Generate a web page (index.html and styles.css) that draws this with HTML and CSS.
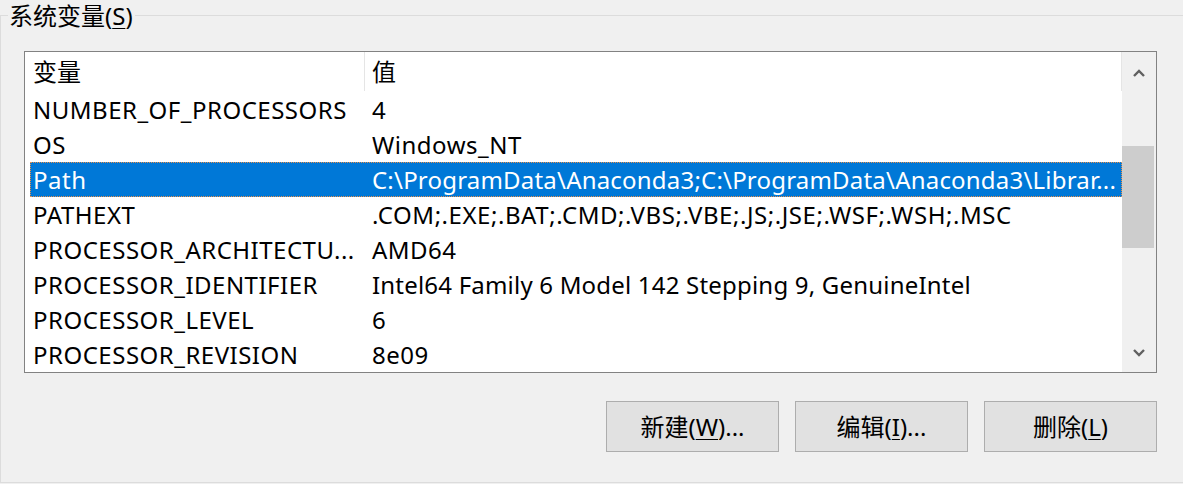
FILE: index.html
```html
<!DOCTYPE html>
<html lang="zh-CN">
<head>
<meta charset="utf-8">
<title>系统变量</title>
<link rel="stylesheet" href="styles.css">
</head>
<body>
<div class="group">
  <div class="title">系统变量(<u>S</u>)</div>
  <div class="list">
    <div class="main">
      <div class="head">
        <div class="hcol hcol1">变量</div>
        <div class="hcol hcol2">值</div>
      </div>
      <div class="row"><div class="c1">NUMBER_OF_PROCESSORS</div><div class="c2">4</div></div>
      <div class="row"><div class="c1">OS</div><div class="c2">Windows_NT</div></div>
      <div class="row sel"><div class="c1">Path</div><div class="c2 tight">C:\ProgramData\Anaconda3;C:\ProgramData\Anaconda3\Librar...</div></div>
      <div class="row"><div class="c1">PATHEXT</div><div class="c2 wide">.COM;.EXE;.BAT;.CMD;.VBS;.VBE;.JS;.JSE;.WSF;.WSH;.MSC</div></div>
      <div class="row"><div class="c1">PROCESSOR_ARCHITECTU...</div><div class="c2">AMD64</div></div>
      <div class="row"><div class="c1">PROCESSOR_IDENTIFIER</div><div class="c2 tight">Intel64 Family 6 Model 142 Stepping 9, GenuineIntel</div></div>
      <div class="row"><div class="c1">PROCESSOR_LEVEL</div><div class="c2">6</div></div>
      <div class="row"><div class="c1">PROCESSOR_REVISION</div><div class="c2">8e09</div></div>
    </div>
    <div class="scroll">
      <div class="sbtn up"><svg width="12" height="8" viewBox="0 0 12 8"><polyline points="1,7 6,2 11,7" fill="none" stroke="#606060" stroke-width="2.4"/></svg></div>
      <div class="track"><div class="thumb"></div></div>
      <div class="sbtn down"><svg width="12" height="8" viewBox="0 0 12 8"><polyline points="1,1 6,6 11,1" fill="none" stroke="#606060" stroke-width="2.4"/></svg></div>
    </div>
  </div>
  <div class="buttons">
    <div class="btn">新建(<u>W</u>)...</div>
    <div class="btn">编辑(<u>I</u>)...</div>
    <div class="btn">删除(<u>L</u>)</div>
  </div>
</div>
</body>
</html>
```
FILE: styles.css
```css
html, body {
  margin: 0;
  padding: 0;
  background: #f0f0f0;
  width: 1183px;
  height: 484px;
  overflow: hidden;
}
body {
  font-family: "Noto Sans", "Noto Sans CJK SC", sans-serif;
  font-size: 24px;
  color: #000;
}
u {
  text-decoration: underline;
  text-underline-offset: 3px;
  text-decoration-thickness: 1px;
}
.group {
  margin-top: 15px;
  width: 1200px;
  height: 466px;
  border: 1px solid #dcdcdc;
  border-right: none;
}
.title {
  display: block;
  width: fit-content;
  margin-top: -16px;
  margin-left: 7px;
  padding: 0 2px 0 1px;
  height: 32px;
  line-height: 32px;
  background: #f0f0f0;
}
.list {
  margin-top: 19px;
  margin-left: 23px;
  width: 1131px;
  height: 320px;
  border: 1px solid #828282;
  background: #fff;
  display: flex;
}
.main {
  width: 1098px;
  display: flex;
  flex-direction: column;
}
.head {
  height: 40px;
  display: flex;
}
.hcol {
  height: 39px;
  line-height: 40px;
  box-sizing: border-box;
  border-right: 1px solid #e5e5e5;
  white-space: nowrap;
}
.hcol1 {
  width: 340px;
  padding-left: 8px;
}
.hcol2 {
  width: 757px;
  padding-left: 7px;
}
.row {
  height: 35px;
  line-height: 35px;
  margin-left: 5px;
  width: 1092px;
  display: flex;
  box-sizing: border-box;
  white-space: nowrap;
  letter-spacing: 0.5px;
}
.c1 {
  width: 334px;
  padding-left: 3px;
  box-sizing: border-box;
  overflow: hidden;
}
.c2 {
  flex: 1;
  padding-left: 8px;
  overflow: hidden;
}
.c2.tight {
  letter-spacing: 0.2px;
}
.c2.wide {
  letter-spacing: 0.55px;
}
.row.sel {
  background: #0078d7;
  color: #fff;
  outline: 1px dotted #e8904a;
  outline-offset: -1px;
}
.scroll {
  width: 34px;
  background: #f0f0f0;
  display: flex;
  flex-direction: column;
}
.sbtn {
  display: flex;
  align-items: center;
  justify-content: center;
}
.sbtn.up {
  height: 42px;
  padding-right: 1px;
}
.sbtn.down {
  height: 38px;
  padding-right: 1px;
}
.track {
  flex: 1;
  padding-top: 52px;
}
.thumb {
  width: 32px;
  height: 102px;
  background: #cdcdcd;
}
.buttons {
  margin-top: 28px;
  margin-left: 23px;
  width: 1133px;
  display: flex;
  justify-content: flex-end;
  gap: 16px;
}
.btn {
  width: 171px;
  height: 49px;
  line-height: 49px;
  border: 1px solid #adadad;
  background: #e1e1e1;
  text-align: center;
  white-space: nowrap;
}
```
